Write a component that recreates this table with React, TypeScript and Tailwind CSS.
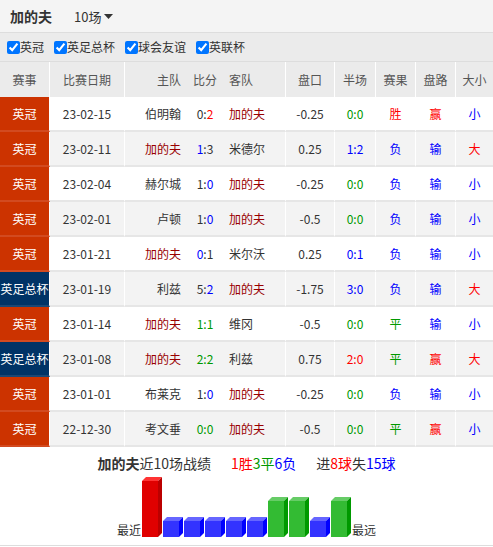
import React from "react";

type Res = "W" | "D" | "L";
type Row = {
  lg: string;
  date: string;
  home: string;
  hg: number;
  ag: number;
  away: string;
  pk: string;
  half: string;
  res: Res;
  pl: "赢" | "输";
  dx: "大" | "小";
};

const TEAM = "加的夫";

const rows: Row[] = [
  { lg: "英冠", date: "23-02-15", home: "伯明翰", hg: 0, ag: 2, away: TEAM, pk: "-0.25", half: "0:0", res: "W", pl: "赢", dx: "小" },
  { lg: "英冠", date: "23-02-11", home: TEAM, hg: 1, ag: 3, away: "米德尔", pk: "0.25", half: "1:2", res: "L", pl: "输", dx: "大" },
  { lg: "英冠", date: "23-02-04", home: "赫尔城", hg: 1, ag: 0, away: TEAM, pk: "-0.25", half: "0:0", res: "L", pl: "输", dx: "小" },
  { lg: "英冠", date: "23-02-01", home: "卢顿", hg: 1, ag: 0, away: TEAM, pk: "-0.5", half: "0:0", res: "L", pl: "输", dx: "小" },
  { lg: "英冠", date: "23-01-21", home: TEAM, hg: 0, ag: 1, away: "米尔沃", pk: "0.25", half: "0:1", res: "L", pl: "输", dx: "小" },
  { lg: "英足总杯", date: "23-01-19", home: "利兹", hg: 5, ag: 2, away: TEAM, pk: "-1.75", half: "3:0", res: "L", pl: "输", dx: "大" },
  { lg: "英冠", date: "23-01-14", home: TEAM, hg: 1, ag: 1, away: "维冈", pk: "-0.5", half: "0:0", res: "D", pl: "输", dx: "小" },
  { lg: "英足总杯", date: "23-01-08", home: TEAM, hg: 2, ag: 2, away: "利兹", pk: "0.75", half: "2:0", res: "D", pl: "赢", dx: "大" },
  { lg: "英冠", date: "23-01-01", home: "布莱克", hg: 1, ag: 0, away: TEAM, pk: "-0.25", half: "0:0", res: "L", pl: "输", dx: "小" },
  { lg: "英冠", date: "22-12-30", home: "考文垂", hg: 0, ag: 0, away: TEAM, pk: "-0.5", half: "0:0", res: "D", pl: "赢", dx: "小" },
];

function halfColor(r: Row): string {
  const [a, b] = r.half.split(":").map(Number);
  if (a === b) return "text-[#009900]";
  const teamWin = r.home === TEAM ? a > b : b > a;
  return teamWin ? "text-[#ff0000]" : "text-[#0000ff]";
}

function Score({ r }: { r: Row }) {
  if (r.res === "D") {
    return <span className="text-[#009900]">{r.hg}:{r.ag}</span>;
  }
  const c = r.res === "W" ? "text-[#ff0000]" : "text-[#0000ff]";
  if (r.home === TEAM) {
    return (
      <span>
        <span className={c}>{r.hg}</span>:{r.ag}
      </span>
    );
  }
  return (
    <span>
      {r.hg}:<span className={c}>{r.ag}</span>
    </span>
  );
}

function Team({ name }: { name: string }) {
  return <span className={name === TEAM ? "text-[#990000]" : ""}>{name}</span>;
}

const resText: Record<Res, [string, string]> = {
  W: ["胜", "text-[#ff0000]"],
  D: ["平", "text-[#009900]"],
  L: ["负", "text-[#0000ff]"],
};

function Filter({ label }: { label: string }) {
  return (
    <label className="flex items-center">
      <input type="checkbox" defaultChecked className="w-[13px] h-[13px] m-0" />
      <span>{label}</span>
    </label>
  );
}

function Bar({ x, h, kind }: { x: number; h: number; kind: Res }) {
  const cols =
    kind === "W"
      ? { front: "#e00000", top: "#ff3333", side: "#bb0000" }
      : kind === "D"
      ? { front: "#33bb33", top: "#66cc66", side: "#009900" }
      : { front: "#3333ff", top: "#6666ff", side: "#0000ff" };
  const bottom = 60;
  const top = bottom - h;
  return (
    <g>
      <rect x={x} y={top + 4} width={16} height={h - 4} fill={cols.front} />
      <polygon points={`${x},${top + 4} ${x + 4},${top} ${x + 20},${top} ${x + 16},${top + 4}`} fill={cols.top} />
      <polygon points={`${x + 16},${top + 4} ${x + 20},${top} ${x + 20},${bottom - 4} ${x + 16},${bottom}`} fill={cols.side} />
    </g>
  );
}

const cell = "flex items-center border-b-2 border-[#e6e6e6]";

export default function App() {
  const heights: Record<Res, number> = { W: 60, D: 40, L: 20 };
  return (
    <div className="w-[493px] h-[547px] overflow-hidden bg-white text-[12px] text-[#333] font-['Noto_Sans_CJK_SC',sans-serif] leading-none">
      {/* top bar */}
      <div className="h-[33px] bg-[#f4f4f4] border-b border-[#dddddd] flex items-center">
        <span className="ml-[10px] text-[14px] font-bold text-[#333]">加的夫</span>
        <span className="ml-[22px] text-[13px] text-[#333] flex items-center">
          10场
          <svg width="9" height="5" viewBox="0 0 9 5" className="ml-[3px]">
            <polygon points="0,0 9,0 4.5,5" fill="#333" />
          </svg>
        </span>
      </div>
      {/* filters */}
      <div className="h-[29px] bg-[#ebebeb] border-b border-[#dddddd] flex items-center pl-[7px] gap-[10px]">
        <Filter label="英冠" />
        <Filter label="英足总杯" />
        <Filter label="球会友谊" />
        <Filter label="英联杯" />
      </div>
      {/* header */}
      <div className="h-[35px] bg-[#ebebeb] flex text-[#555]">
        <div className="w-[50px] border-r border-white flex items-center justify-center">赛事</div>
        <div className="w-[75px] border-r border-white flex items-center justify-center">比赛日期</div>
        <div className="w-[61px] flex items-center justify-end pr-[5px]">主队</div>
        <div className="w-[38px] flex items-center justify-center">比分</div>
        <div className="w-[62px] border-r border-white flex items-center pl-[5px]">客队</div>
        <div className="w-[49px] border-r border-white flex items-center justify-center">盘口</div>
        <div className="w-[41px] border-r border-white flex items-center justify-center">半场</div>
        <div className="w-[40px] border-r border-white flex items-center justify-center">赛果</div>
        <div className="w-[40px] border-r border-white flex items-center justify-center">盘路</div>
        <div className="w-[37px] flex items-center justify-center">大小</div>
      </div>
      {/* rows */}
      {rows.map((r, i) => {
        const bg = i % 2 === 0 ? "bg-white" : "bg-[#f3f3f3]";
        const lgBg = r.lg === "英冠" ? "bg-[#cc3300] border-b-[#d24a20]" : "bg-[#003366] border-b-[#1a4775]";
        const [rt, rc] = resText[r.res];
        return (
          <div key={i} className={`h-[35px] flex ${bg}`}>
            <div className={`w-[50px] border-r border-r-white flex items-center justify-center text-white border-b-2 ${lgBg}`}>{r.lg}</div>
            <div className={`w-[75px] border-r border-r-white justify-center ${cell}`}>{r.date}</div>
            <div className={`w-[61px] justify-end pr-[5px] ${cell}`}>
              <Team name={r.home} />
            </div>
            <div className={`w-[38px] justify-center ${cell}`}>
              <Score r={r} />
            </div>
            <div className={`w-[62px] border-r border-r-white pl-[5px] ${cell}`}>
              <Team name={r.away} />
            </div>
            <div className={`w-[49px] border-r border-r-white justify-center ${cell}`}>{r.pk}</div>
            <div className={`w-[41px] border-r border-r-white justify-center ${cell} ${halfColor(r)}`}>{r.half}</div>
            <div className={`w-[40px] border-r border-r-white justify-center ${cell} ${rc}`}>{rt}</div>
            <div className={`w-[40px] border-r border-r-white justify-center ${cell} ${r.pl === "赢" ? "text-[#ff0000]" : "text-[#0000ff]"}`}>{r.pl}</div>
            <div className={`w-[37px] justify-center ${cell} ${r.dx === "大" ? "text-[#ff0000]" : "text-[#0000ff]"}`}>{r.dx}</div>
          </div>
        );
      })}
      {/* summary */}
      <div className="border-b border-[#dddddd] pb-[8px]">
        <div className="flex justify-center gap-[20px] text-[14px] leading-[20px] pt-[6px] text-[#333]">
          <span>
            <b>加的夫</b>近10场战绩
          </span>
          <span>
            <span className="text-[#ff0000]">1胜</span>
            <span className="text-[#009900]">3平</span>
            <span className="text-[#0000ff]">6负</span>
          </span>
          <span>
            进<span className="text-[#ff0000]">8球</span>失<span className="text-[#0000ff]">15球</span>
          </span>
        </div>
        <div className="flex justify-center items-end mt-[4px]">
          <span className="leading-[14px]">最近</span>
          <svg width="210" height="60" viewBox="0 0 210 60" className="ml-[1px]">
            {rows.map((r, i) => (
              <Bar key={i} x={i * 21} h={heights[r.res]} kind={r.res} />
            ))}
          </svg>
          <span className="leading-[14px]">最远</span>
        </div>
      </div>
    </div>
  );
}
